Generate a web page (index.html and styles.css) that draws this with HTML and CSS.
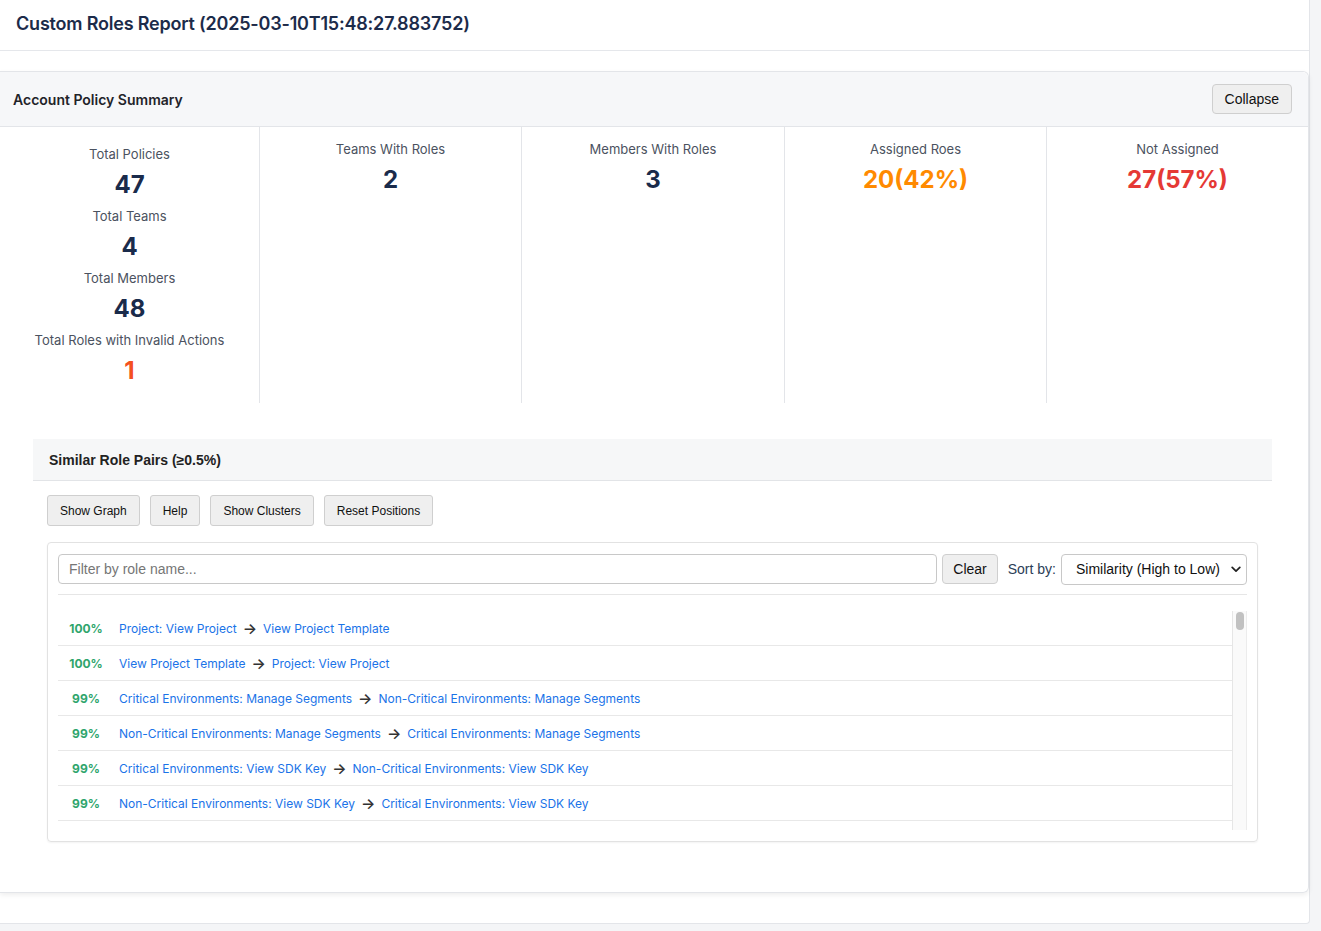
FILE: index.html
```html
<!DOCTYPE html>
<html lang="en">
<head>
<meta charset="utf-8">
<title>Custom Roles Report</title>
<link rel="stylesheet" href="styles.css">
</head>
<body>
<div class="page">
  <header class="top">
    <h1>Custom Roles Report (2025-03-10T15:48:27.883752)</h1>
  </header>

  <section class="card">
    <div class="card-head">
      <h2>Account Policy Summary</h2>
      <button class="btn btn-lg">Collapse</button>
    </div>

    <div class="stats">
      <div class="stat-col first">
        <div class="stat"><div class="stat-label">Total Policies</div><div class="stat-value">47</div></div>
        <div class="stat"><div class="stat-label">Total Teams</div><div class="stat-value">4</div></div>
        <div class="stat"><div class="stat-label">Total Members</div><div class="stat-value">48</div></div>
        <div class="stat"><div class="stat-label">Total Roles with Invalid Actions</div><div class="stat-value v-alert">1</div></div>
      </div>
      <div class="stat-col">
        <div class="stat"><div class="stat-label">Teams With Roles</div><div class="stat-value">2</div></div>
      </div>
      <div class="stat-col">
        <div class="stat"><div class="stat-label">Members With Roles</div><div class="stat-value">3</div></div>
      </div>
      <div class="stat-col">
        <div class="stat"><div class="stat-label">Assigned Roes</div><div class="stat-value v-orange">20(42%)</div></div>
      </div>
      <div class="stat-col">
        <div class="stat"><div class="stat-label">Not Assigned</div><div class="stat-value v-red">27(57%)</div></div>
      </div>
    </div>

    <div class="pairs">
      <div class="pairs-head">Similar Role Pairs (≥0.5%)</div>
      <div class="toolbar">
        <button class="btn">Show Graph</button>
        <button class="btn">Help</button>
        <button class="btn">Show Clusters</button>
        <button class="btn">Reset Positions</button>
      </div>

      <div class="box">
        <div class="filter-row">
          <input class="filter" type="text" placeholder="Filter by role name...">
          <button class="btn btn-lg btn-clear">Clear</button>
          <span class="sort-label">Sort by:</span>
          <span class="select-wrap">
            <select class="sort">
              <option>Similarity (High to Low)</option>
              <option>Similarity (Low to High)</option>
              <option>Name (A-Z)</option>
            </select>
            <svg class="chev" width="10" height="7" viewBox="0 0 10 7"><path d="M1.2 1.4 L5 5.2 L8.8 1.4" fill="none" stroke="#222" stroke-width="1.7" stroke-linecap="round" stroke-linejoin="round"/></svg>
          </span>
        </div>

        <div class="list-wrap">
          <ul class="list">
            <li><span class="pct">100%</span><a href="#">Project: View Project</a><span class="arrow">→</span><a href="#">View Project Template</a></li>
            <li><span class="pct">100%</span><a href="#">View Project Template</a><span class="arrow">→</span><a href="#">Project: View Project</a></li>
            <li><span class="pct">99%</span><a href="#">Critical Environments: Manage Segments</a><span class="arrow">→</span><a href="#">Non-Critical Environments: Manage Segments</a></li>
            <li><span class="pct">99%</span><a href="#">Non-Critical Environments: Manage Segments</a><span class="arrow">→</span><a href="#">Critical Environments: Manage Segments</a></li>
            <li><span class="pct">99%</span><a href="#">Critical Environments: View SDK Key</a><span class="arrow">→</span><a href="#">Non-Critical Environments: View SDK Key</a></li>
            <li><span class="pct">99%</span><a href="#">Non-Critical Environments: View SDK Key</a><span class="arrow">→</span><a href="#">Critical Environments: View SDK Key</a></li>
          </ul>
          <div class="scrollbar"><div class="thumb"></div></div>
        </div>
      </div>
    </div>
  </section>
</div>
</body>
</html>
```

FILE: styles.css
```css
* { box-sizing: border-box; }

html, body {
  margin: 0;
  padding: 0;
}

body {
  background: #f4f5f7;
  font-family: Inter, "Noto Sans", "Liberation Sans", sans-serif;
  color: #1f2937;
}

.page {
  width: 1310px;
  background: #ffffff;
  border-right: 1px solid #e3e5e9;
  border-bottom: 1px solid #e3e5e9;
  border-bottom-right-radius: 4px;
  padding-bottom: 30px;
}

/* ---------- top header ---------- */
.top {
  height: 51px;
  display: flex;
  align-items: center;
  padding: 0 16px 4px;
  border-bottom: 1px solid #e5e7eb;
}

.top h1 {
  margin: 0;
  font-size: 18px;
  font-weight: 600;
  color: #1c2b4a;
  letter-spacing: -0.2px;
}

/* ---------- card ---------- */
.card {
  margin-top: 20px;
  border: 1px solid #e3e5e9;
  border-left: none;
  border-radius: 0 6px 6px 0;
  box-shadow: 0 2px 5px rgba(0, 0, 0, 0.07);
  padding-bottom: 50px;
}

.card-head {
  height: 55px;
  display: flex;
  align-items: center;
  justify-content: space-between;
  padding: 0 16px 0 13px;
  background: #f6f7f9;
  border-bottom: 1px solid #e3e5e9;
  border-top-right-radius: 6px;
}

.card-head h2 {
  margin: 0;
  font-size: 14px;
  font-weight: 600;
  color: #1f2329;
}

/* ---------- buttons ---------- */
.btn {
  font-family: "Liberation Sans", Arial, sans-serif;
  font-size: 12px;
  color: #111;
  background: #efefef;
  border: 1px solid #cfcfcf;
  border-radius: 3px;
  height: 31px;
  padding: 0 12px;
  cursor: pointer;
}

.btn-lg {
  font-size: 14px;
  height: 30px;
  padding: 0 12px;
  border-radius: 4px;
}

/* ---------- stats ---------- */
.stats {
  display: grid;
  grid-template-columns: 260px 262px 263px 262px 1fr;
}

.stat-col {
  border-right: 1px solid #e3e5e9;
  padding: 14px 6px 18px;
  text-align: center;
}

.stat-col:last-child {
  border-right: none;
}

.stat-col.first {
  padding-top: 19px;
}

.stat + .stat {
  margin-top: 9px;
}

.stat-label {
  font-size: 13px;
  line-height: 16px;
  color: #4b5260;
}

.stat-value {
  margin-top: 9px;
  font-size: 24px;
  line-height: 28px;
  font-weight: 700;
  color: #1a2b4b;
}

.v-alert { color: #f4511e; }
.v-orange { color: #ff8a00; }
.v-red { color: #e53935; }

/* ---------- similar pairs ---------- */
.pairs {
  margin: 36px 36px 0 33px;
}

.pairs-head {
  height: 42px;
  display: flex;
  align-items: center;
  padding-left: 16px;
  background: #f6f7f8;
  border-bottom: 1px solid #e2e4e7;
  font-family: "Liberation Sans", Arial, sans-serif;
  font-size: 14px;
  font-weight: 700;
  color: #222;
}

.toolbar {
  display: flex;
  gap: 10px;
  margin: 14px 0 0 14px;
}

.box {
  margin: 16px 14px 0;
  border: 1px solid #e2e2e2;
  border-radius: 4px;
  padding: 11px 10px 11px;
  box-shadow: 0 1px 2px rgba(0, 0, 0, 0.05);
}

.filter-row {
  display: flex;
  align-items: center;
  height: 41px;
  padding-bottom: 10px;
  border-bottom: 1px solid #e6e6e6;
}

.filter {
  flex: 1;
  height: 30px;
  border: 1px solid #c8c8c8;
  border-radius: 4px;
  padding: 0 10px;
  font-family: "Liberation Sans", Arial, sans-serif;
  font-size: 14px;
  color: #222;
}

.filter::placeholder {
  color: #767676;
}

.btn-clear {
  margin-left: 5px;
  padding: 0 10px;
}

.sort-label {
  margin: 0 5px 0 10px;
  font-family: "Liberation Sans", Arial, sans-serif;
  font-size: 14px;
  color: #2b3e57;
}

.select-wrap {
  position: relative;
  display: inline-block;
}

.sort {
  -webkit-appearance: none;
  appearance: none;
  width: 186px;
  height: 31px;
  border: 1px solid #c8c8c8;
  border-radius: 4px;
  background: #fff;
  padding: 0 0 0 14px;
  font-family: "Liberation Sans", Arial, sans-serif;
  font-size: 14px;
  color: #111;
  display: block;
}

.chev {
  position: absolute;
  right: 6px;
  top: 12px;
  pointer-events: none;
}

/* ---------- list ---------- */
.list-wrap {
  display: flex;
  height: 219px;
  margin-top: 16px;
}

.list {
  flex: 1;
  list-style: none;
  margin: 0;
  padding: 0;
  overflow: hidden;
}

.list li {
  display: flex;
  align-items: center;
  height: 35px;
  border-bottom: 1px solid #e8e8e8;
  padding-left: 10px;
  font-size: 12px;
  white-space: nowrap;
}

.list .pct {
  width: 36px;
  margin-right: 15px;
  text-align: center;
  font-weight: 700;
  color: #2ea56c;
}

.list a {
  color: #1a73e8;
  text-decoration: none;
}

.list .arrow {
  margin: 0 6px;
  color: #333;
  font-size: 15px;
  line-height: 1;
  font-weight: 600;
}

.scrollbar {
  width: 15px;
  background: #fafafa;
  border-left: 1px solid #e6e6e6;
  border-right: 1px solid #ececec;
  padding: 1px 2px 0 3px;
}

.thumb {
  height: 18px;
  border-radius: 5px;
  background: #c1c1c1;
}
```
